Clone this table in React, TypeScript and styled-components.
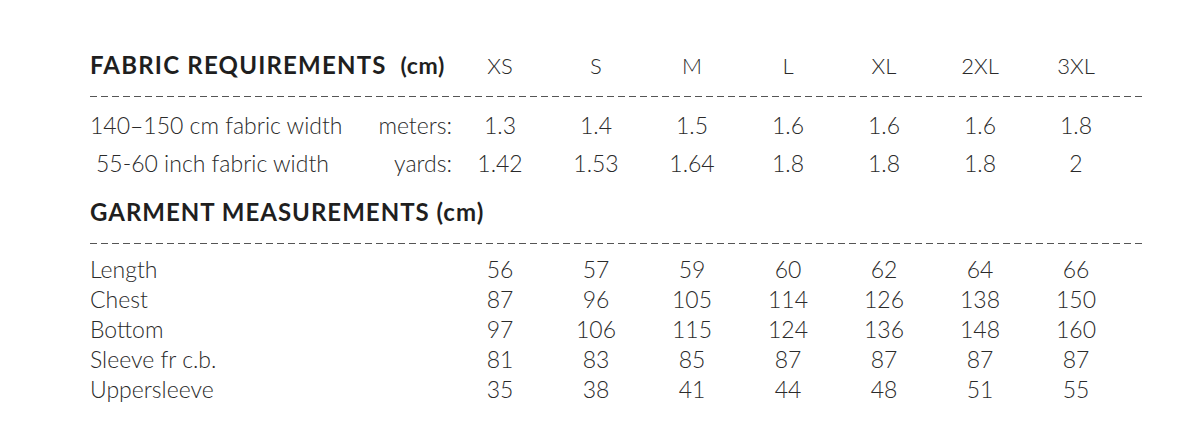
import styled, { createGlobalStyle } from "styled-components";

const GlobalStyle = createGlobalStyle`
  html, body {
    margin: 0;
    padding: 0;
    background: #ffffff;
  }
  body {
    font-family: Lato, "Noto Sans", "Liberation Sans", sans-serif;
    color: #2d2d2d;
  }
`;

const sizes = ["XS", "S", "M", "L", "XL", "2XL", "3XL"];

const fabric = [
  { label: "140–150 cm fabric width", unit: "meters:", values: ["1.3", "1.4", "1.5", "1.6", "1.6", "1.6", "1.8"], indent: 0 },
  { label: "55-60 inch fabric width", unit: "yards:", values: ["1.42", "1.53", "1.64", "1.8", "1.8", "1.8", "2"], indent: 6 },
];

const garment = [
  { label: "Length", values: ["56", "57", "59", "60", "62", "64", "66"] },
  { label: "Chest", values: ["87", "96", "105", "114", "126", "138", "150"] },
  { label: "Bottom", values: ["97", "106", "115", "124", "136", "148", "160"] },
  { label: "Sleeve fr c.b.", values: ["81", "83", "85", "87", "87", "87", "87"] },
  { label: "Uppersleeve", values: ["35", "38", "41", "44", "48", "51", "55"] },
];

export default function App() {
  return (
    <>
      <GlobalStyle />
      <Page>
        <HeaderRow>
          <Heading>
            FABRIC REQUIREMENTS<Unit>(cm)</Unit>
          </Heading>
          {sizes.map((s) => (
            <SizeCell key={s}>{s}</SizeCell>
          ))}
        </HeaderRow>
        <Dashes $gap={14} />
        <FabricBlock>
          {fabric.map((row) => (
            <FabricRow key={row.label}>
              <FabricLabel $indent={row.indent}>
                <span>{row.label}</span>
                <span>{row.unit}</span>
              </FabricLabel>
              {row.values.map((v, i) => (
                <ValueCell key={i}>{v}</ValueCell>
              ))}
            </FabricRow>
          ))}
        </FabricBlock>
        <SectionHeading>GARMENT MEASUREMENTS (cm)</SectionHeading>
        <Dashes $gap={16} />
        <MeasureBlock>
          {garment.map((row) => (
            <MeasureRow key={row.label}>
              <MeasureLabel>{row.label}</MeasureLabel>
              {row.values.map((v, i) => (
                <ValueCell key={i}>{v}</ValueCell>
              ))}
            </MeasureRow>
          ))}
        </MeasureBlock>
      </Page>
    </>
  );
}

const Page = styled.div`
  width: 1200px;
  height: 441px;
  box-sizing: border-box;
  padding: 48px 55px 0 90px;
  overflow: hidden;
`;

const TableRow = styled.div`
  display: grid;
  grid-template-columns: 362px repeat(7, 96px);
  align-items: center;
`;

const HeaderRow = styled(TableRow)`
  height: 34px;
`;

const Heading = styled.div`
  font-weight: 700;
  font-size: 24px;
  line-height: 30px;
  letter-spacing: 1.2px;
  color: #1f1f1f;
  white-space: nowrap;
`;

const Unit = styled.span`
  margin-left: 14px;
  font-size: 23px;
  letter-spacing: 0.6px;
`;

const SizeCell = styled.div`
  text-align: center;
  font-size: 22px;
  font-weight: 300;
  color: #2a2a2a;
`;

const Dashes = styled.div<{ $gap: number }>`
  height: 1px;
  margin-top: ${(p) => p.$gap}px;
  background: repeating-linear-gradient(
    to right,
    #555 0px,
    #555 7px,
    transparent 7px,
    transparent 11px
  );
`;

const FabricBlock = styled.div`
  padding-top: 9px;
`;

const FabricRow = styled(TableRow)`
  height: 38px;
`;

const FabricLabel = styled.div<{ $indent: number }>`
  display: flex;
  justify-content: space-between;
  padding-left: ${(p) => p.$indent}px;
  font-size: 23px;
  font-weight: 300;
  white-space: nowrap;
  color: #2a2a2a;
`;

const ValueCell = styled.div`
  text-align: center;
  font-size: 23px;
  font-weight: 300;
  color: #2a2a2a;
`;

const SectionHeading = styled.div`
  margin-top: 15px;
  font-weight: 700;
  font-size: 24px;
  line-height: 30px;
  letter-spacing: 1px;
  color: #1f1f1f;
  white-space: nowrap;
`;

const MeasureBlock = styled.div`
  padding-top: 10px;
`;

const MeasureRow = styled(TableRow)`
  height: 30px;
`;

const MeasureLabel = styled.div`
  font-size: 23px;
  font-weight: 300;
  color: #2a2a2a;
`;
